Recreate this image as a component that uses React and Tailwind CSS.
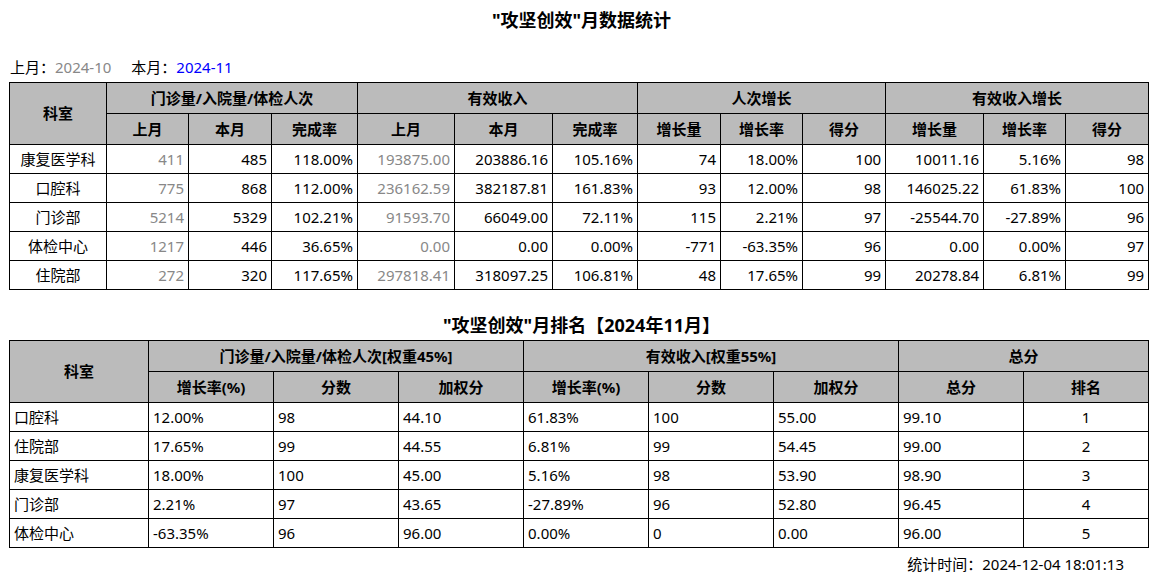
const font = { fontFamily: '"Noto Sans", "Noto Sans CJK SC", sans-serif' };

const t1 = [
  ["康复医学科", "411", "485", "118.00%", "193875.00", "203886.16", "105.16%", "74", "18.00%", "100", "10011.16", "5.16%", "98"],
  ["口腔科", "775", "868", "112.00%", "236162.59", "382187.81", "161.83%", "93", "12.00%", "98", "146025.22", "61.83%", "100"],
  ["门诊部", "5214", "5329", "102.21%", "91593.70", "66049.00", "72.11%", "115", "2.21%", "97", "-25544.70", "-27.89%", "96"],
  ["体检中心", "1217", "446", "36.65%", "0.00", "0.00", "0.00%", "-771", "-63.35%", "96", "0.00", "0.00%", "97"],
  ["住院部", "272", "320", "117.65%", "297818.41", "318097.25", "106.81%", "48", "17.65%", "99", "20278.84", "6.81%", "99"],
];

const t2 = [
  ["口腔科", "12.00%", "98", "44.10", "61.83%", "100", "55.00", "99.10", "1"],
  ["住院部", "17.65%", "99", "44.55", "6.81%", "99", "54.45", "99.00", "2"],
  ["康复医学科", "18.00%", "100", "45.00", "5.16%", "98", "53.90", "98.90", "3"],
  ["门诊部", "2.21%", "97", "43.65", "-27.89%", "96", "52.80", "96.45", "4"],
  ["体检中心", "-63.35%", "96", "96.00", "0.00%", "0", "0.00", "96.00", "5"],
];

const w1 = [97, 82, 83, 86, 97, 98, 85, 83, 82, 83, 98, 82, 83];
const w2 = [139, 125, 125, 125, 125, 125, 125, 125, 125];

const th = "border border-black bg-[#bbbbbb] font-bold text-center h-[31px] p-0";
const grayCols = [1, 4];

export default function App() {
  return (
    <div className="w-[1163px] h-[580px] bg-white text-black text-[15px] px-[9px]" style={font}>
      <div className="h-[40px] leading-[40px] text-center text-[18px] font-bold">"攻坚创效"月数据统计</div>
      <div className="mt-[17px] mb-[5px] h-[20px] leading-[20px] pl-[1px]">
        上月：<span className="text-[#888]">2024-10</span>
        <span className="ml-[20px]">本月：</span>
        <span className="text-[#0000ff]">2024-11</span>
      </div>

      <table className="border-collapse table-fixed w-[1139px]">
        <colgroup>
          {w1.map((w, i) => (
            <col key={i} style={{ width: w }} />
          ))}
        </colgroup>
        <thead>
          <tr>
            <th rowSpan={2} className={th}>科室</th>
            <th colSpan={3} className={th}>门诊量/入院量/体检人次</th>
            <th colSpan={3} className={th}>有效收入</th>
            <th colSpan={3} className={th}>人次增长</th>
            <th colSpan={3} className={th}>有效收入增长</th>
          </tr>
          <tr>
            {["上月", "本月", "完成率", "上月", "本月", "完成率", "增长量", "增长率", "得分", "增长量", "增长率", "得分"].map((h, i) => (
              <th key={i} className={th}>{h}</th>
            ))}
          </tr>
        </thead>
        <tbody>
          {t1.map((r, ri) => (
            <tr key={ri}>
              {r.map((c, ci) => (
                <td
                  key={ci}
                  className={
                    "border border-black h-[29px] p-0 " +
                    (ci === 0 ? "text-center" : "text-right pr-[4px]") +
                    (grayCols.includes(ci) ? " text-[#888]" : "")
                  }
                >
                  {c}
                </td>
              ))}
            </tr>
          ))}
        </tbody>
      </table>

      <div className="pt-[25px] pb-[5px] leading-[20px] text-center text-[18px] font-bold">"攻坚创效"月排名【2024年11月】</div>

      <table className="border-collapse table-fixed w-[1139px]">
        <colgroup>
          {w2.map((w, i) => (
            <col key={i} style={{ width: w }} />
          ))}
        </colgroup>
        <thead>
          <tr>
            <th rowSpan={2} className={th}>科室</th>
            <th colSpan={3} className={th}>门诊量/入院量/体检人次[权重45%]</th>
            <th colSpan={3} className={th}>有效收入[权重55%]</th>
            <th colSpan={2} className={th}>总分</th>
          </tr>
          <tr>
            {["增长率(%)", "分数", "加权分", "增长率(%)", "分数", "加权分", "总分", "排名"].map((h, i) => (
              <th key={i} className={th}>{h}</th>
            ))}
          </tr>
        </thead>
        <tbody>
          {t2.map((r, ri) => (
            <tr key={ri}>
              {r.map((c, ci) => (
                <td
                  key={ci}
                  className={"border border-black h-[29px] p-0 " + (ci === 8 ? "text-center" : "text-left pl-[4px]")}
                >
                  {c}
                </td>
              ))}
            </tr>
          ))}
        </tbody>
      </table>

      <div className="mt-[6px] leading-[20px] text-right pr-[30px]">统计时间：2024-12-04 18:01:13</div>
    </div>
  );
}
